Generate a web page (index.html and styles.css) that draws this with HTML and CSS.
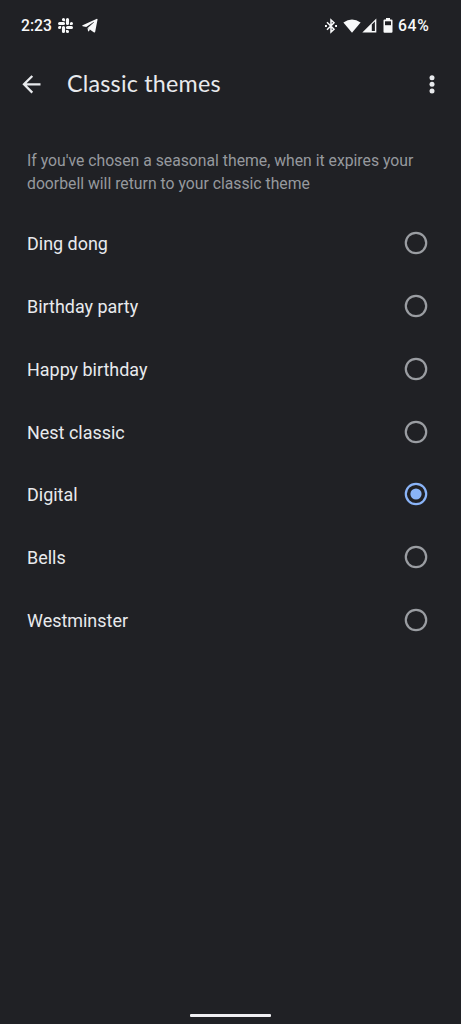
FILE: index.html
```html
<!DOCTYPE html>
<html lang="en">
<head>
<meta charset="utf-8">
<title>Classic themes</title>
<link rel="stylesheet" href="styles.css">
</head>
<body>
<div class="screen">
  <div class="status">
    <span class="time">2:23</span>
    <svg class="slack" width="15" height="15" viewBox="0 0 24 24" fill="currentColor"><path d="M5 15.2a2.500 2.500 0 1 1-2.500-2.500H5zM6.300 15.200a2.500 2.500 0 0 1 5 0v6.300a2.500 2.500 0 0 1-5 0zM8.800 5a2.500 2.500 0 1 1 2.500-2.500V5zM8.800 6.300a2.500 2.500 0 0 1 0 5H2.500a2.500 2.500 0 0 1 0-5zM19 8.800a2.500 2.500 0 1 1 2.500 2.500H19zM17.700 8.800a2.500 2.500 0 0 1-5 0V2.500a2.500 2.500 0 0 1 5 0zM15.200 19a2.500 2.500 0 1 1-2.500 2.500V19zM15.200 17.700a2.500 2.500 0 0 1 0-5h6.300a2.500 2.500 0 0 1 0 5z"/></svg>
    <svg class="telegram" width="16" height="15" viewBox="0 0 16 15" fill="currentColor"><path d="M.6 7.300 14.400.9q1.300-.5 1.100.9l-2.300 11.900q-.3 1.300-1.500.5L5.700 9.900 12 4.300q.3-.5-.4-.2L4.200 9 .7 8.200q-.9-.4-.1-.9z"/><path d="m5.500 9.700 2.700 2-1.500 1.600q-.6.500-.7-.3z"/></svg>
    <span class="spacer"></span>
    <svg class="bluetooth" width="14" height="16" viewBox="0 0 14 16" fill="none" stroke="currentColor" stroke-width="1.500"><path d="m3 4.300 7 6.900L7 14V2l3 2.800-7 6.900"/><path d="M1 8h1.900M11.100 8H13" stroke-width="1.900"/></svg>
    <svg class="wifi" width="18" height="14" viewBox="0 0 18 14" fill="currentColor"><path d="M.4 3.400Q9-2.600 17.600 3.400L9 13.800z"/></svg>
    <svg class="signal" width="15" height="15" viewBox="0 0 15 15"><path d="M.3 14.500 14.300.5v14z" fill="currentColor"/><path d="M9.800 6.500 12.900 3.400v9.700H9.800z" class="cutout"/></svg>
    <svg class="battery" width="10" height="15" viewBox="0 0 10 15"><path d="M3 0h4v1.500h1.500q1 0 1 1v11.300q0 1-1 1h-7q-1 0-1-1V2.500q0-1 1-1H3z" fill="currentColor"/><path d="M2 3.300h6v3.900H2z" class="cutout"/></svg>
    <span class="percent">64%</span>
  </div>
  <header class="appbar">
    <svg class="back" width="20" height="20" viewBox="0 0 20 20" fill="none" stroke="currentColor" stroke-width="2.300"><path d="M18.500 10.300H2.500M10.300 2 2 10.300l8.300 8.300"/></svg>
    <h1 class="title">Classic themes</h1>
    <svg class="more" width="6" height="20" viewBox="0 0 6 20" fill="currentColor"><circle cx="3" cy="3.700" r="2.500"/><circle cx="3" cy="10.300" r="2.500"/><circle cx="3" cy="16.900" r="2.500"/></svg>
  </header>
  <p class="description">If you've chosen a seasonal theme, when it expires your doorbell will return to your classic theme</p>
  <div class="options">
    <div class="option"><span>Ding dong</span><svg class="radio" viewBox="0 0 24 24"><circle class="ring" cx="12" cy="12" r="10.200"/></svg></div>
    <div class="option"><span>Birthday party</span><svg class="radio" viewBox="0 0 24 24"><circle class="ring" cx="12" cy="12" r="10.200"/></svg></div>
    <div class="option"><span>Happy birthday</span><svg class="radio" viewBox="0 0 24 24"><circle class="ring" cx="12" cy="12" r="10.200"/></svg></div>
    <div class="option"><span>Nest classic</span><svg class="radio" viewBox="0 0 24 24"><circle class="ring" cx="12" cy="12" r="10.200"/></svg></div>
    <div class="option"><span>Digital</span><svg class="radio selected" viewBox="0 0 24 24"><circle class="ring" cx="12" cy="12" r="10.200"/><circle class="dot" cx="12" cy="12" r="5.600"/></svg></div>
    <div class="option"><span>Bells</span><svg class="radio" viewBox="0 0 24 24"><circle class="ring" cx="12" cy="12" r="10.200"/></svg></div>
    <div class="option"><span>Westminster</span><svg class="radio" viewBox="0 0 24 24"><circle class="ring" cx="12" cy="12" r="10.200"/></svg></div>
  </div>
  <div class="home"></div>
</div>
</body>
</html>
```
FILE: styles.css
```css
* { box-sizing: border-box; }
body { margin: 0; background: #202125; }
svg { display: block; flex: none; }
.screen {
  display: flex;
  flex-direction: column;
  height: 1024px;
  background: #202125;
  color: #e8eaed;
  font-family: Roboto, sans-serif;
}
.status {
  display: flex;
  align-items: center;
  height: 51px;
  padding: 0 31px 0 21px;
  color: #f8f9fa;
  font: 500 15.700px/20px Roboto, sans-serif;
}
.time { width: 37px; white-space: nowrap; }
.telegram { margin-left: 9px; }
.spacer { flex: 1; }
.wifi { margin-left: 5px; }
.signal { margin-left: 1px; }
.battery { margin-left: 6px; }
.cutout { fill: #202125; }
.percent { width: 32px; margin-left: 5px; letter-spacing: .700px; white-space: nowrap; }
.appbar {
  display: flex;
  align-items: center;
  height: 66px;
  padding: 0 26px 0 22px;
}
.title {
  flex: 1;
  margin: 0 0 2px 25px;
  font: 400 23.300px/30px Lato, sans-serif;
  letter-spacing: .220px;
}
.description {
  width: 400px;
  margin: 32px 0 17.600px 27px;
  color: #96999e;
  font-size: 15.760px;
  line-height: 23px;
}
.option {
  display: flex;
  align-items: center;
  justify-content: space-between;
  height: 62.700px;
  padding: 0 33px 0 27px;
  font-size: 17.950px;
}
.radio {
  width: 24px;
  height: 24px;
  margin-bottom: 1px;
}
.ring { fill: none; stroke: #9a9da2; stroke-width: 2.200px; }
.selected .ring { stroke: #8ab4f8; }
.dot { fill: #8ab4f8; }
.home {
  width: 81px;
  height: 3px;
  margin: auto auto 7px 190px;
  border-radius: 1px;
  background: #f0f0f3;
}
```
